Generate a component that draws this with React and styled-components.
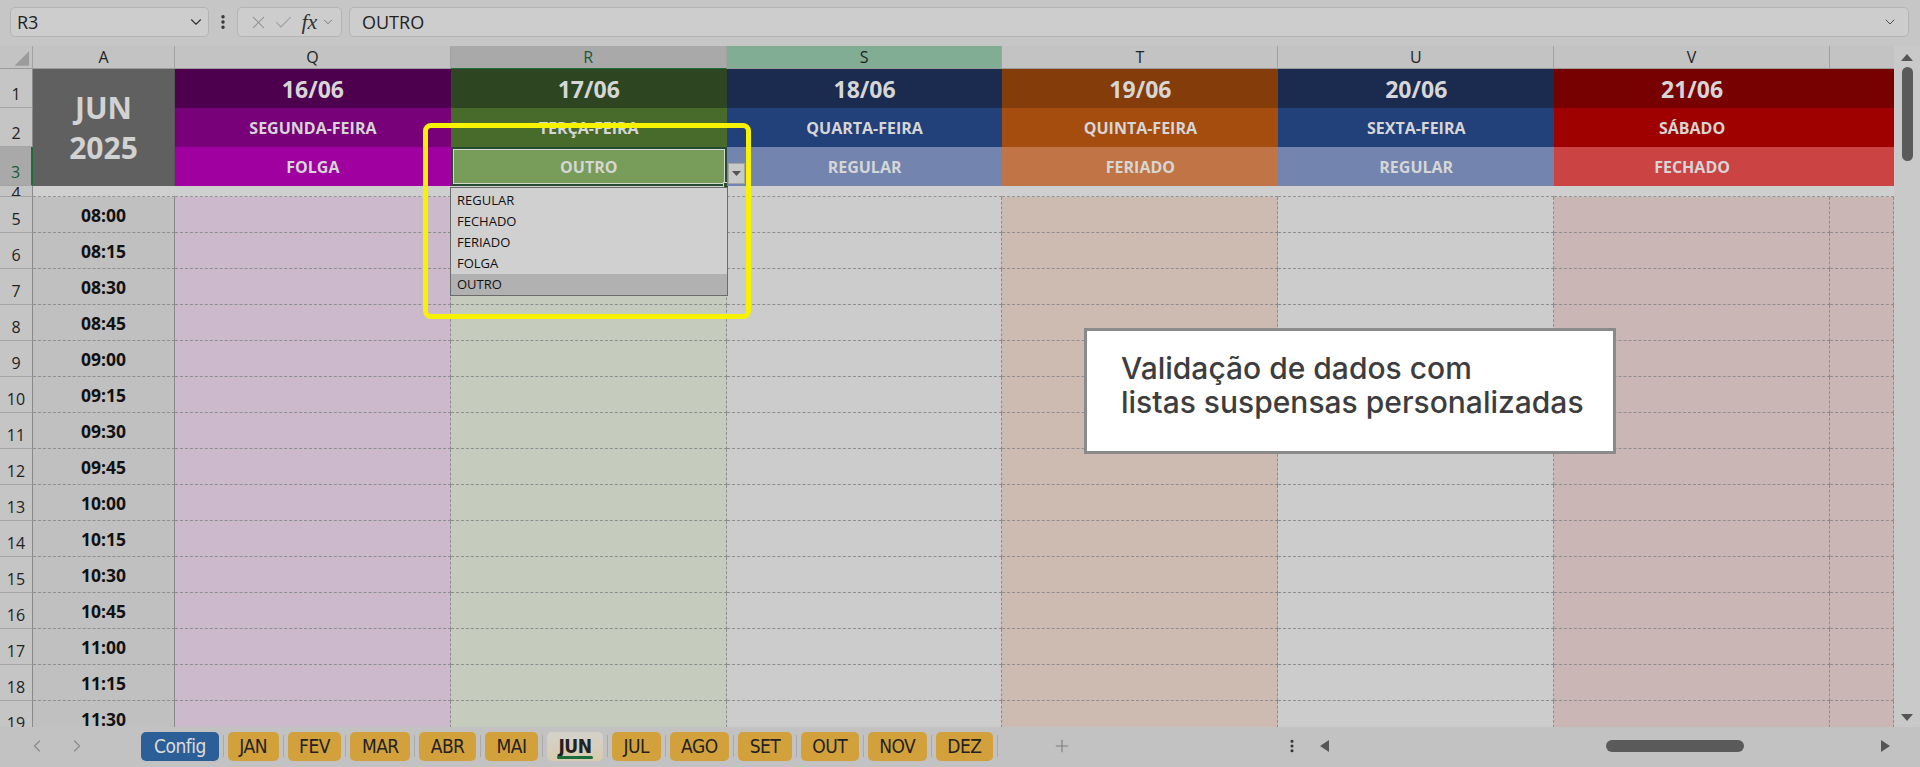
import React from "react";
import styled, { createGlobalStyle } from "styled-components";
import {
  X,
  Check,
  ChevronDown,
  ChevronLeft,
  ChevronRight,
  Plus,
  EllipsisVertical,
} from "lucide-react";

const GlobalStyle = createGlobalStyle`
  html, body {
    margin: 0;
    padding: 0;
    background: #c6c6c6;
    font-family: "Open Sans", "Noto Sans", sans-serif;
  }
  * { box-sizing: border-box; }
`;

const days = [
  { col: "Q", date: "16/06", name: "SEGUNDA-FEIRA", status: "FOLGA", c1: "#4d004d", c2: "#780078", c3: "#9f009f", body: "#ccb9cc" },
  { col: "R", date: "17/06", name: "TERÇA-FEIRA", status: "OUTRO", c1: "#2d4520", c2: "#486a2b", c3: "#789c5a", body: "#c5ccbd" },
  { col: "S", date: "18/06", name: "QUARTA-FEIRA", status: "REGULAR", c1: "#1b2a4f", c2: "#22407a", c3: "#7384ae", body: "#cccccc" },
  { col: "T", date: "19/06", name: "QUINTA-FEIRA", status: "FERIADO", c1: "#843c0b", c2: "#a54c0f", c3: "#c17547", body: "#cdbbb2" },
  { col: "U", date: "20/06", name: "SEXTA-FEIRA", status: "REGULAR", c1: "#1b2a4f", c2: "#22407a", c3: "#7384ae", body: "#cccccc" },
  { col: "V", date: "21/06", name: "SÁBADO", status: "FECHADO", c1: "#770000", c2: "#9f0000", c3: "#cb4343", body: "#cbb6b6" },
  { col: "", date: "", name: "", status: "", c1: "#770000", c2: "#9f0000", c3: "#cb4343", body: "#cbb6b6" },
];

const times = [
  "08:00", "08:15", "08:30", "08:45", "09:00", "09:15", "09:30", "09:45",
  "10:00", "10:15", "10:30", "10:45", "11:00", "11:15", "11:30",
];

const months = ["JAN", "FEV", "MAR", "ABR", "MAI", "JUN", "JUL", "AGO", "SET", "OUT", "NOV", "DEZ"];
const options = ["REGULAR", "FECHADO", "FERIADO", "FOLGA", "OUTRO"];

export default function App() {
  return (
    <>
      <GlobalStyle />
      <Window>
        <FormulaBar>
          <NameBox>
            <span>R3</span>
            <ChevronDown size={18} strokeWidth={1.5} color="#333" />
          </NameBox>
          <EllipsisVertical size={18} strokeWidth={2.6} color="#333" />
          <FxBox>
            <X size={21} strokeWidth={1.2} color="#8e8e8e" />
            <Check size={21} strokeWidth={1.2} color="#9a9a9a" />
            <Fx>fx</Fx>
            <ChevronDown size={14} strokeWidth={1.4} color="#666" />
          </FxBox>
          <FormulaInput>
            <span>OUTRO</span>
            <ChevronDown size={16} strokeWidth={1.4} color="#444" />
          </FormulaInput>
        </FormulaBar>

        <SheetArea>
          <Grid>
            <ColHead>
              <svg width="33" height="23" viewBox="0 0 33 23">
                <polygon points="30,5 30,20 15,20" fill="#9c9c9c" />
              </svg>
            </ColHead>
            <ColHead>A</ColHead>
            {days.map((d, i) => (
              <ColHead key={i} $active={d.col === "R"} $tint={d.col === "S"} $last={!d.col}>
                {d.col}
              </ColHead>
            ))}

            <RowHead>1</RowHead>
            <MonthCell>
              <span>JUN</span>
              <span>2025</span>
            </MonthCell>
            {days.map((d, i) => (
              <DayHead key={i} $bg={d.c1} $size={23}>{d.date}</DayHead>
            ))}

            <RowHead>2</RowHead>
            {days.map((d, i) => (
              <DayHead key={i} $bg={d.c2} $size={16}>{d.name}</DayHead>
            ))}

            <RowHead $active>3</RowHead>
            {days.map((d, i) => (
              <DayHead key={i} $bg={d.c3} $size={16} $selected={d.col === "R"}>
                {d.status}
                {d.col === "R" && <FillHandle />}
              </DayHead>
            ))}

            <RowHead $short>4</RowHead>
            <GapCell />
            {days.map((d, i) => (
              <GapCell key={i} />
            ))}

            {times.map((t, r) => (
              <React.Fragment key={t}>
                <RowHead>{r + 5}</RowHead>
                <TimeCell>{t}</TimeCell>
                {days.map((d, i) => (
                  <BodyCell key={i} $bg={d.body} />
                ))}
              </React.Fragment>
            ))}
          </Grid>

          <VScroll>
            <ArrowUp />
            <VThumb />
            <ArrowDown />
          </VScroll>

          <Highlight />
          <DropButton>
            <svg width="9" height="5" viewBox="0 0 9 5">
              <polygon points="0,0 9,0 4.5,5" fill="#555" />
            </svg>
          </DropButton>
          <DropList>
            {options.map((o) => (
              <DropItem key={o} $hover={o === "OUTRO"}>{o}</DropItem>
            ))}
          </DropList>

          <Callout>
            Validação de dados com
            <br />
            listas suspensas personalizadas
          </Callout>
        </SheetArea>

        <TabBar>
          <TabNav>
            <ChevronLeft size={20} strokeWidth={1.4} color="#8a8a8a" />
            <ChevronRight size={20} strokeWidth={1.4} color="#8a8a8a" />
          </TabNav>
          <Tabs>
            <Tab $kind="config">Config</Tab>
            {months.map((m) => (
              <React.Fragment key={m}>
                <TabSep />
                <Tab $kind={m === "JUN" ? "active" : "month"}>{m}</Tab>
              </React.Fragment>
            ))}
            <TabSep />
          </Tabs>
          <AddSheet>
            <Plus size={20} strokeWidth={1.3} color="#7d7d7d" />
          </AddSheet>
          <HScroll>
            <EllipsisVertical size={16} strokeWidth={2.6} color="#333" />
            <HTrack>
              <svg width="9" height="12" viewBox="0 0 9 12">
                <polygon points="9,0 9,12 0,6" fill="#555" />
              </svg>
              <HThumb />
              <svg width="9" height="12" viewBox="0 0 9 12">
                <polygon points="0,0 0,12 9,6" fill="#555" />
              </svg>
            </HTrack>
          </HScroll>
        </TabBar>
      </Window>
    </>
  );
}

const Window = styled.div`
  width: 1920px;
  height: 767px;
  display: flex;
  flex-direction: column;
  overflow: hidden;
  background: #c6c6c6;
`;

const FormulaBar = styled.div`
  height: 46px;
  flex-shrink: 0;
  display: flex;
  align-items: flex-start;
  padding: 7px 11px 0 10px;
  gap: 5px;
  & > svg {
    margin-top: 6px;
  }
`;

const BarBox = styled.div`
  height: 30px;
  display: flex;
  align-items: center;
  background: #cdcdcd;
  border: 1px solid #b4b4b4;
  border-radius: 5px;
  color: #222;
  font-family: "Open Sans", "Noto Sans", sans-serif;
  font-size: 18px;
`;

const NameBox = styled(BarBox)`
  width: 199px;
  padding: 0 3px 0 6px;
  justify-content: space-between;
`;

const FxBox = styled(BarBox)`
  width: 105px;
  padding: 0 6px 0 10px;
  justify-content: space-between;
`;

const Fx = styled.i`
  font-family: "Liberation Serif", "DejaVu Serif", serif;
  font-size: 22px;
  color: #333;
  margin-left: 4px;
`;

const FormulaInput = styled(BarBox)`
  flex: 1;
  margin-left: 2px;
  padding: 0 10px 0 12px;
  justify-content: space-between;
`;

const SheetArea = styled.div`
  position: relative;
  display: flex;
  height: 681px;
  flex-shrink: 0;
`;

const Grid = styled.div`
  display: grid;
  grid-template-columns: 33px 142px repeat(6, 275.83px) 64px;
  grid-template-rows: 23px 39px 39px 39px 11px;
  grid-auto-rows: 36px;
  align-content: start;
  width: 1894px;
  height: 681px;
  overflow: hidden;
`;

const ColHead = styled.div`
  display: flex;
  align-items: center;
  justify-content: center;
  background: ${(p) => (p.$active ? "#a9a9a9" : p.$tint ? "#80ad93" : "#c3c3c3")};
  color: ${(p) => (p.$active ? "#1d5a34" : "#222")};
  border-right: 1px solid ${(p) => (p.$last ? "transparent" : "#a2a2a2")};
  border-bottom: 1px solid ${(p) => (p.$active ? "#1f6b3c" : "#9a9a9a")};
  font-size: 16px;
  overflow: hidden;
`;

const RowHead = styled.div`
  display: flex;
  align-items: ${(p) => (p.$short ? "flex-start" : "flex-end")};
  justify-content: center;
  padding-bottom: 3px;
  background: ${(p) => (p.$active ? "#a9a9a9" : "#c5c5c5")};
  color: ${(p) => (p.$active ? "#1d5a34" : "#222")};
  border-right: ${(p) => (p.$active ? "2px solid #1f6b3c" : "1px solid #8a8a8a")};
  border-bottom: 1px solid #a4a4a4;
  font-size: 16px;
  line-height: ${(p) => (p.$short ? "14px" : "20px")};
  overflow: hidden;
`;

const MonthCell = styled.div`
  grid-row: span 3;
  display: flex;
  flex-direction: column;
  align-items: center;
  justify-content: center;
  background: #606060;
  color: #d2d2d2;
  font-weight: 700;
  font-size: 30px;
  line-height: 40px;
  border-right: 1px solid #555;
`;

const DayHead = styled.div`
  position: relative;
  display: flex;
  align-items: center;
  justify-content: center;
  background: ${(p) => p.$bg};
  color: #d6d6d6;
  font-weight: 700;
  font-size: ${(p) => p.$size}px;
  border: ${(p) => (p.$selected ? "2px solid #264d31" : "none")};
  box-shadow: ${(p) => (p.$selected ? "inset 0 0 0 1px #d4d8cf" : "none")};
  white-space: nowrap;
`;

const FillHandle = styled.span`
  position: absolute;
  right: -4px;
  bottom: -4px;
  width: 6px;
  height: 6px;
  background: #264d31;
  border: 1px solid #d4d8cf;
`;

const GapCell = styled.div`
  background: #cfcfcf;
  border-bottom: 1px dashed #959595;
`;

const TimeCell = styled.div`
  display: flex;
  align-items: center;
  justify-content: center;
  background: #c0c0c0;
  color: #111;
  font-weight: 700;
  font-size: 17.5px;
  border-bottom: 1px dashed #8e8e8e;
  border-right: 1px solid #8a8a8a;
`;

const BodyCell = styled.div`
  background: ${(p) => p.$bg};
  border-bottom: 1px dashed #8e8e8e;
  border-right: 1px dashed #8e8e8e;
`;

const VScroll = styled.div`
  width: 26px;
  display: flex;
  flex-direction: column;
  align-items: center;
  padding: 8px 0 6px;
  background: #c9c9c9;
`;

const ArrowUp = styled.div`
  width: 0;
  height: 0;
  border-left: 6px solid transparent;
  border-right: 6px solid transparent;
  border-bottom: 7px solid #555;
`;

const ArrowDown = styled.div`
  margin-top: auto;
  width: 0;
  height: 0;
  border-left: 6px solid transparent;
  border-right: 6px solid transparent;
  border-top: 7px solid #555;
`;

const VThumb = styled.div`
  margin-top: 6px;
  width: 11px;
  height: 94px;
  border-radius: 6px;
  background: #5a5a5a;
`;

const Highlight = styled.div`
  position: absolute;
  left: 423px;
  top: 77px;
  width: 328px;
  height: 196px;
  border: 5px solid #f7f300;
  border-radius: 8px;
  pointer-events: none;
`;

const DropButton = styled.div`
  position: absolute;
  left: 728px;
  top: 117px;
  width: 17px;
  height: 21px;
  display: flex;
  align-items: center;
  justify-content: center;
  background: #c9c9c9;
  border: 1px solid #a3a3a3;
`;

const DropList = styled.div`
  position: absolute;
  left: 450px;
  top: 141px;
  width: 278px;
  padding-top: 2px;
  background: #d0d0d0;
  border: 1px solid #6b6b6b;
`;

const DropItem = styled.div`
  height: 21px;
  line-height: 21px;
  padding-left: 6px;
  font-size: 13px;
  color: #111;
  background: ${(p) => (p.$hover ? "#b1b1b1" : "transparent")};
`;

const Callout = styled.div`
  position: absolute;
  left: 1084px;
  top: 282px;
  width: 532px;
  height: 126px;
  padding: 20px 0 0 34px;
  background: #fff;
  border: 3px solid #8a8a8a;
  color: #3d3d3d;
  font-family: "Inter", "Open Sans", sans-serif;
  font-size: 30px;
  font-weight: 500;
  line-height: 34px;
`;

const TabBar = styled.div`
  flex: 1;
  display: flex;
  align-items: center;
  background: #c2c2c2;
  padding-bottom: 2px;
`;

const TabNav = styled.div`
  width: 141px;
  display: flex;
  align-items: center;
  gap: 20px;
  padding-left: 27px;
`;

const Tabs = styled.div`
  display: flex;
  align-items: center;
`;

const TabSep = styled.div`
  width: 1px;
  height: 22px;
  margin: 0 4px;
  background: #a9a9a9;
`;

const tabColors = {
  config: { bg: "#2c5f97", fg: "#dcdcdc" },
  month: { bg: "#d3a13c", fg: "#222" },
  active: { bg: "linear-gradient(#d4d2cc, #d8ccae)", fg: "#222" },
};

const Tab = styled.div`
  position: relative;
  height: 29px;
  padding: 0 ${(p) => (p.$kind === "config" ? 13 : 11.5)}px;
  display: flex;
  align-items: center;
  border-radius: 5px;
  background: ${(p) => tabColors[p.$kind].bg};
  color: ${(p) => tabColors[p.$kind].fg};
  font-family: "DejaVu Sans Condensed", "Liberation Sans Narrow", "Roboto", sans-serif;
  font-size: 19px;
  font-weight: ${(p) => (p.$kind === "active" ? 700 : 400)};
  letter-spacing: -0.5px;
  &::after {
    content: "";
    display: ${(p) => (p.$kind === "active" ? "block" : "none")};
    position: absolute;
    left: 10px;
    right: 10px;
    bottom: 2px;
    height: 3px;
    border-radius: 2px;
    background: #1c6b3a;
  }
`;

const AddSheet = styled.div`
  display: flex;
  margin-left: 50px;
`;

const HScroll = styled.div`
  margin-left: auto;
  width: 636px;
  display: flex;
  align-items: center;
  padding-right: 30px;
`;

const HTrack = styled.div`
  flex: 1;
  display: flex;
  align-items: center;
  margin-left: 20px;
  & > svg:last-child {
    margin-left: auto;
  }
`;

const HThumb = styled.div`
  margin-left: 277px;
  width: 138px;
  height: 12px;
  border-radius: 6px;
  background: #5a5a5a;
`;
